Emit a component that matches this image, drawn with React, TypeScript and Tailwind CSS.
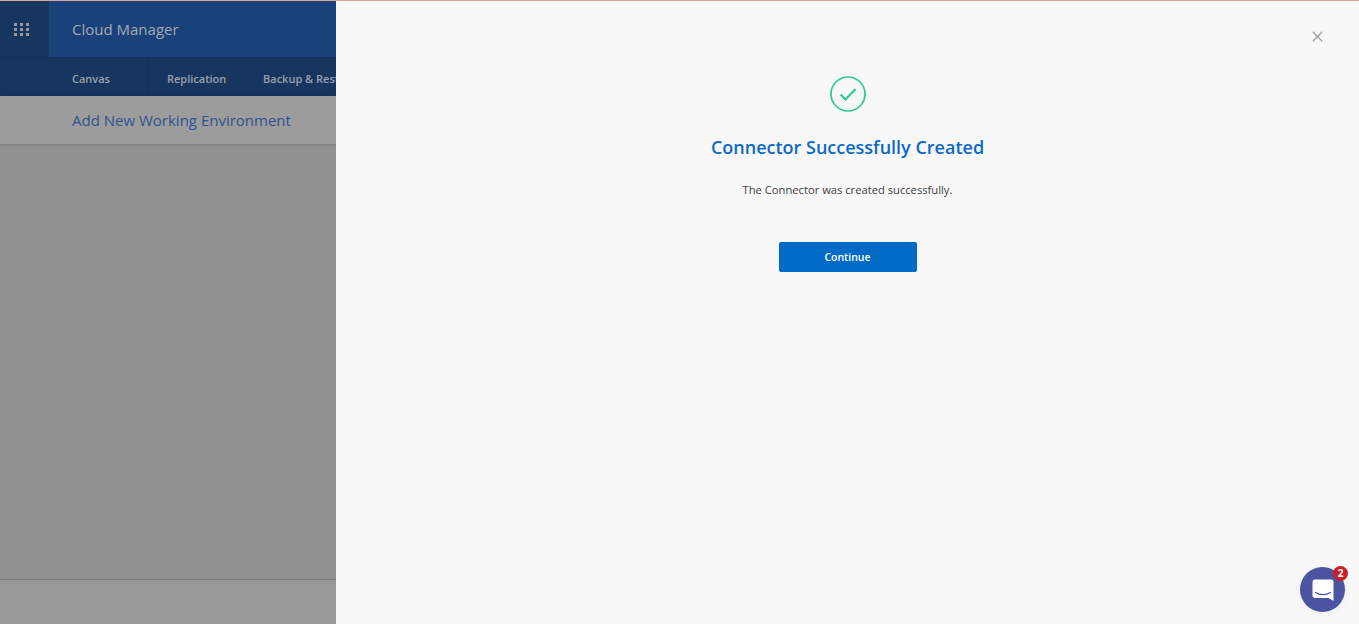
import { X } from "lucide-react";

const navItems = [
  { label: "Canvas", className: "w-[149px] pl-[72px] border-r border-[#12305a]" },
  { label: "Replication", className: "pl-[18px] w-[114px]" },
  { label: "Backup & Restore", className: "pl-0 whitespace-nowrap" },
];

function GridIcon() {
  return (
    <div className="grid grid-cols-3 gap-x-[3px] gap-y-[2px] mr-[7px]">
      {Array.from({ length: 9 }).map((_, i) => (
        <span key={i} className="w-[3px] h-[3px] bg-[#999999]" />
      ))}
    </div>
  );
}

function ChatBubble() {
  return (
    <div className="absolute right-[14px] bottom-[12px] w-[45px] h-[45px] rounded-full bg-[#4a54a0] flex items-center justify-center shadow-[0_1px_6px_rgba(0,0,0,0.06)]">
      <svg width="22" height="23" viewBox="0 0 22 23" className="mt-[1px] ml-[1px]">
        <path d="M3 0.5h16a2.5 2.5 0 0 1 2.5 2.5v19l-5-3H3A2.5 2.5 0 0 1 0.5 16V3A2.5 2.5 0 0 1 3 0.5z" fill="#ffffff" />
        <path d="M3.5 13.5c4.5 2.6 10.5 2.6 15 0" fill="none" stroke="#4a54a0" strokeWidth="1.2" strokeLinecap="round" />
      </svg>
      <span className="absolute -top-[1px] -right-[3px] w-[15px] h-[15px] rounded-full bg-[#c9202a] text-white text-[10px] font-bold leading-[15px] text-center">
        2
      </span>
    </div>
  );
}

export default function App() {
  return (
    <div className="relative h-[624px] w-[1359px] overflow-hidden flex flex-col font-['Open_Sans',sans-serif]">
      <div className="h-px bg-[#d8a79e] shrink-0" />
      <div className="flex flex-1 min-h-0">
        {/* Dimmed page behind the panel */}
        <div className="w-[336px] shrink-0 flex flex-col overflow-hidden">
          <div className="h-[56px] flex bg-[#1a4179] shrink-0">
            <div className="w-[49px] bg-[#16365f] flex items-center justify-center">
              <GridIcon />
            </div>
            <div className="pl-[23px] flex items-center text-[15px] text-[#a3a9b2]">Cloud Manager</div>
          </div>
          <div className="h-[39px] flex bg-[#16365f] border-t border-[#12305a] shrink-0">
            {navItems.map((item) => (
              <div key={item.label} className={`flex items-center pt-[4px] text-[11px] font-semibold text-[#98a0ac] shrink-0 ${item.className}`}>
                {item.label}
              </div>
            ))}
          </div>
          <div className="h-[48px] bg-[#9c9c9c] pl-[72px] flex items-center text-[15px] text-[#2f5391] shadow-[0_1px_3px_rgba(0,0,0,0.15)] shrink-0 z-10">
            Add New Working Environment
          </div>
          <div className="flex-1 bg-[#929292] border-b border-[#7a7a7a]" />
          <div className="h-[44px] bg-[#999999] shrink-0" />
        </div>

        {/* Success panel */}
        <div className="relative flex-1 bg-[#f8f8f8] flex flex-col items-center pt-[75px]">
          <button className="absolute top-[27px] right-[33px] text-[#a3a3a3]">
            <X size={17} strokeWidth={2} />
          </button>
          <svg width="36" height="36" viewBox="0 0 36 36">
            <circle cx="18" cy="18" r="17" fill="none" stroke="#2bcb93" strokeWidth="1.7" />
            <path d="M10.5 18.5l5 5 10-10.5" fill="none" stroke="#2bcb93" strokeWidth="2.2" />
          </svg>
          <h1 className="mt-[20px] text-[18px] leading-[30px] font-semibold text-[#0b69c7]">Connector Successfully Created</h1>
          <p className="mt-[19px] text-[11.2px] leading-[18px] text-[#404040]">The Connector was created successfully.</p>
          <button className="mt-[43px] w-[138px] h-[30px] pt-[1px] rounded-[2px] bg-[#006bc7] text-white text-[10.5px] font-semibold">
            Continue
          </button>
        </div>
      </div>
      <ChatBubble />
    </div>
  );
}
